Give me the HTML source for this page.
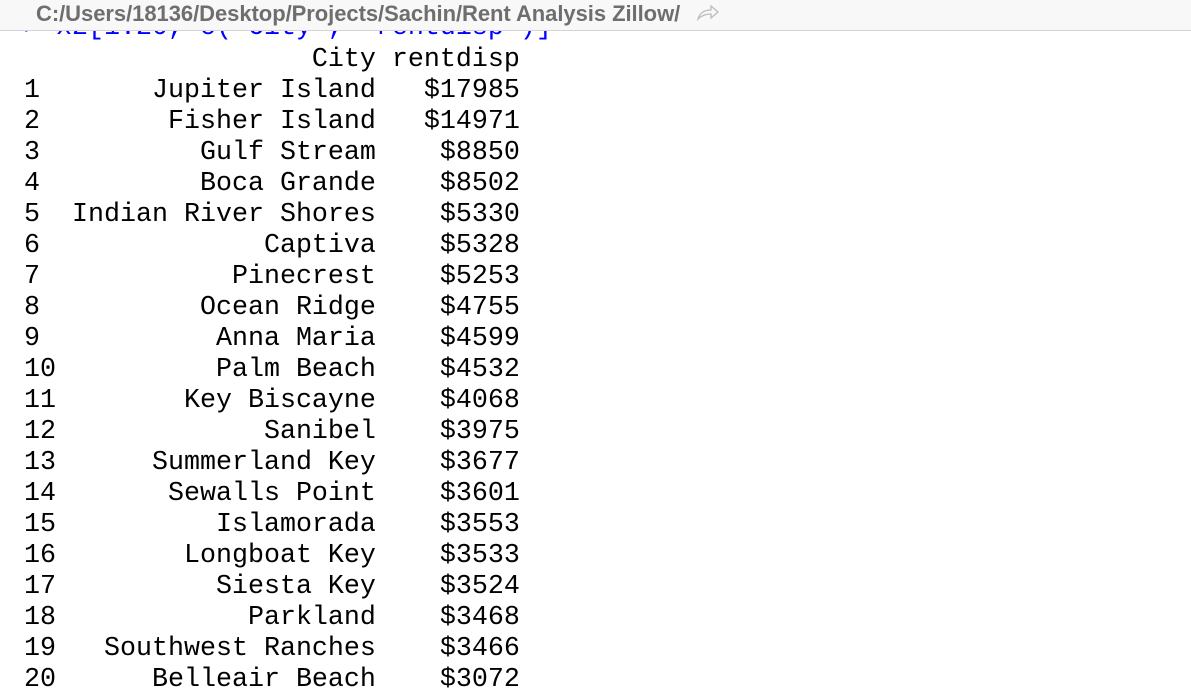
<!DOCTYPE html>
<html><head><style>
html,body{margin:0;padding:0;width:1191px;height:689px;overflow:hidden;background:#fff;}
.hdr{position:absolute;left:0;top:0;width:1191px;height:30px;background:#f8f8f8;border-bottom:1px solid #d4d4d4;z-index:2;}
.hdr span{position:absolute;left:36px;top:1px;font:bold 22px "Liberation Sans",sans-serif;color:#6e6e6e;white-space:pre;letter-spacing:-0.05px;}
.hdr svg{position:absolute;left:696px;top:3px;}
pre{position:absolute;left:24px;margin:0;font-family:"Liberation Mono",monospace;font-size:26.67px;line-height:31px;color:#000;}
.cmd{top:13px;color:#0000ff;}
.out{top:45px;}
</style></head><body>
<div class="hdr"><span>C:/Users/18136/Desktop/Projects/Sachin/Rent Analysis Zillow/</span>
<svg width="24" height="20" viewBox="0 0 24 20"><path d="M2 16 C4 9 9 7 15 7 L15 3 L22 9 L15 15 L15 11 C10 11 6 12 2 16 Z" fill="none" stroke="#bbb" stroke-width="1.3"/></svg></div>
<pre class="cmd">&gt; x2[1:20, c("City", "rentdisp")]</pre>
<pre class="out">                  City rentdisp
1       Jupiter Island   $17985
2        Fisher Island   $14971
3          Gulf Stream    $8850
4          Boca Grande    $8502
5  Indian River Shores    $5330
6              Captiva    $5328
7            Pinecrest    $5253
8          Ocean Ridge    $4755
9           Anna Maria    $4599
10          Palm Beach    $4532
11        Key Biscayne    $4068
12             Sanibel    $3975
13      Summerland Key    $3677
14       Sewalls Point    $3601
15          Islamorada    $3553
16        Longboat Key    $3533
17          Siesta Key    $3524
18            Parkland    $3468
19   Southwest Ranches    $3466
20      Belleair Beach    $3072</pre>
</body></html>
